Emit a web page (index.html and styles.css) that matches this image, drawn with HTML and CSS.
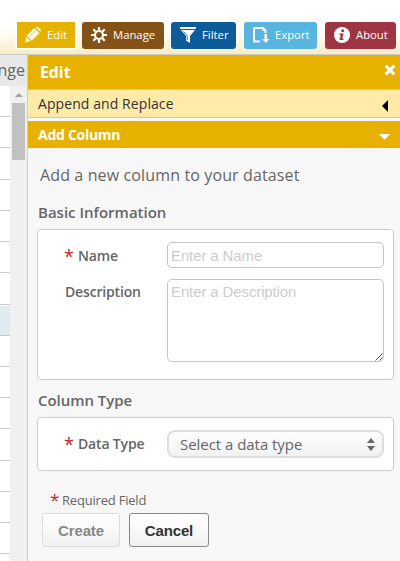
FILE: index.html
```
<!DOCTYPE html>
<html lang="en">
<head>
<meta charset="utf-8">
<title>Edit dataset</title>
<link rel="stylesheet" href="styles.css">
</head>
<body>
<header class="toolbar">
  <button class="tool edit"><svg width="18" height="18" viewBox="0 0 18 18"><g fill="#fff8dc"><path d="M1 16.5 2.2 10.7 6.6 15.2z"/><path d="M2.6 9.8 10.4 2 15.6 7.2 7.8 14.8z"/><path d="M11.4 1.2Q13 .2 14.3 1.2L16.4 3.3Q17.4 4.7 16.3 6.1z"/></g><path d="M4.6 11.4 12.2 3.9" stroke="#efcf68" stroke-width=".8"/></svg><span>Edit</span></button>
  <button class="tool manage"><svg width="18" height="18" viewBox="0 0 18 18"><g stroke="#fff" fill="none"><circle cx="9" cy="9" r="4" stroke-width="2.2"/><path stroke-width="2.2" d="M9 1v3M9 14v3M1 9h3M14 9h3M3.3 3.3l2.2 2.2M12.5 12.5l2.2 2.2M3.3 14.7l2.2-2.2M12.5 5.5l2.2-2.2"/></g></svg><span>Manage</span></button>
  <button class="tool filter"><svg width="18" height="18" viewBox="0 0 18 18"><path fill="#fff" d="M1 1h16v2H1zM2 4h14l-5 6v7l-4-2.5V10z"/><path d="M4.5 5.3 8.2 9.8v4" fill="none" stroke="#0c5c9c" stroke-width=".8"/></svg><span>Filter</span></button>
  <button class="tool export"><svg width="18" height="18" viewBox="0 0 18 18"><path d="M8 15.5H2V2h9l2.5 2.5V7" fill="none" stroke="#fff" stroke-width="2"/><path fill="#fff" d="M10.5 1v4h4zM12.5 8h2.5v5h2.5l-3.7 4-3.8-4h2.5z"/></svg><span>Export</span></button>
  <button class="tool about"><svg width="18" height="18" viewBox="0 0 18 18"><circle cx="9" cy="9" r="8" fill="#fff"/><g fill="#9f3443"><circle cx="9.7" cy="4.8" r="1.5"/><path d="M6.6 7.4h4L9.3 12.4h1.5l-.6 1.6H6.5l1.3-5.1H6.3z"/></g></svg><span>About</span></button>
</header>
<main class="main">
  <section class="grid">
    <div class="heading">nge</div>
    <div class="scroller">
      <div class="rows"><i></i><i></i><i></i><i></i><i></i><i></i><i></i><i class="selected"></i><i></i><i></i><i></i><i></i><i></i><i></i><i></i><i></i></div>
      <div class="scrollbar"><b class="up"></b><b class="thumb"></b></div>
    </div>
  </section>
  <aside class="panel">
    <div class="title"><h1>Edit</h1><svg width="12" height="12" viewBox="0 0 12 12"><path d="M1.7 1.7l8.6 8.6M10.3 1.7l-8.6 8.6" stroke="#fff" stroke-width="3.2"/></svg></div>
    <div class="section"><span>Append and Replace</span><svg width="6" height="12" viewBox="0 0 6 12"><path d="M6 0v12L0 6z"/></svg></div>
    <div class="section active"><span>Add Column</span><svg width="11" height="6" viewBox="0 0 11 6"><path d="M0 0h11L5.5 6z" fill="#fff"/></svg></div>
    <form class="form">
      <p class="intro"><span>Add a new column to your dataset</span></p>
      <h2>Basic Information</h2>
      <div class="card basics">
        <label><em>*</em><span>Name</span></label><input placeholder="Enter a Name">
        <label class="description"><span>Description</span></label><div class="area"><textarea placeholder="Enter a Description"></textarea><svg class="grip" width="8" height="8" viewBox="0 0 8 8"><path d="M.5 7.5l7-7M4.5 7.5l3-3" stroke="#555" stroke-width="1"/></svg></div>
      </div>
      <h2 class="second">Column Type</h2>
      <div class="card type">
        <label><em>*</em><span>Data Type</span></label>
        <div class="select"><span>Select a data type</span><svg width="8" height="13" viewBox="0 0 8 13"><path d="M0 5 4 0l4 5zM0 8h8l-4 5z" fill="#666"/></svg></div>
      </div>
      <p class="required"><em>*</em><span>Required Field</span></p>
      <div class="actions"><button type="button" class="create" disabled>Create</button><button type="button" class="cancel">Cancel</button></div>
    </form>
  </aside>
</main>
</body>
</html>
```
FILE: styles.css
```
* { box-sizing: border-box; }
body { margin: 0; width: 400px; height: 561px; overflow: hidden; background: #fff; font-family: "Open Sans", sans-serif; color: #666; }
svg { display: block; flex: none; }
h1, h2, p { margin: 0; }
em { font-style: normal; }
.toolbar { height: 55px; padding: 22px 4px 0 17px; display: flex; align-items: flex-start; border-bottom: 1px solid #ccc; background: linear-gradient(#fff 20px, #fffdf6 34px, #f7ecc4 54px); }
.tool { height: 27px; display: flex; align-items: center; border: 0; border-radius: 3px; padding: 0 0 1px 8px; gap: 5px; color: #fff; font: 11.3px/16px "Open Sans", sans-serif; white-space: nowrap; }
.edit { width: 58px; height: 26px; padding: 0 0 0 7px; margin-right: 7px; background: #e7b100; border-radius: 0; box-shadow: 0 0 0 1.5px #fff; gap: 5px; }
.manage { width: 82px; margin-right: 7px; background: #845117; }
.filter { width: 65px; margin-right: 8px; background: #0c5c9c; }
.export { width: 73px; margin-right: 8px; background: #57b5df; }
.about { width: 71px; background: #9f3443; }
.main { display: flex; height: 506px; }
.grid { width: 28px; flex: none; border-right: 1px solid #ccc; }
.heading { height: 31px; background: #e8e8e8; font-size: 16px; line-height: 31px; display: flex; justify-content: flex-end; padding-right: 2px; overflow: hidden; }
.scroller { display: flex; height: 475px; }
.rows { width: 10px; height: 475px; overflow: hidden; }
.rows i { display: block; height: 31.22px; border-bottom: 1px solid #ccc; }
.rows .selected { background: #dfebf1; border-top: 1px solid #fff; }
.scrollbar { width: 17px; background: #f0f0f0; display: flex; flex-direction: column; align-items: center; padding-top: 7px; }
.up { border: 4px solid transparent; border-top: 0; border-bottom-color: #a3a3a3; }
.thumb { width: 13px; height: 57px; margin-top: 6px; background: #c1c1c1; }
.panel { width: 372px; background: #f7f7f7; }
.title { height: 35px; padding: 0 4px 4px 12px; display: flex; align-items: center; justify-content: space-between; background: #e7b100; border-bottom: 1px solid #fc2; color: #fff; }
.title h1 { font-size: 15.8px; line-height: 22px; padding-top: 3px; }
.title svg { margin-top: -1px; }
.section { height: 28px; padding: 0 12px 0 10px; display: flex; align-items: center; justify-content: space-between; background: #ffeaa8; border-bottom: 1px solid #fc2; color: #333; font-size: 14px; letter-spacing: .08px; }
.section svg { margin-top: 4px; }
.section.active { height: 27px; margin-top: 3px; border: 0; background: #e7b100; color: #fff; font-weight: 700; padding: 0 10px 0 10px; letter-spacing: -.28px; }
.active svg { margin-top: 5px; }
.form { padding: 0 6px 0 9px; }
.intro { font-size: 16px; line-height: 22px; padding: 16px 0 0 3px; height: 54px; letter-spacing: .13px; }
h2 { font-size: 15px; font-weight: 600; line-height: 20px; height: 27px; padding-left: 1px; }
h2.second { height: 27px; margin-top: 10px; letter-spacing: -.05px; }
.card { background: #fff; border: 1px solid #ccc; border-radius: 4px; display: grid; grid-template-columns: 102px 217px; padding: 12px 9px 12px 27px; align-items: start; }
.basics { height: 151px; row-gap: 11px; grid-template-rows: 26px 83px; }
.type { height: 54px; }
label { display: flex; font-size: 14px; font-weight: 600; line-height: 20px; padding-top: 4px; letter-spacing: -.17px; }
label.description { padding-top: 3px; }
label em, .required em { color: #c8202a; font-weight: 400; font-size: 18px; width: 13px; line-height: 20px; margin-left: -1px; margin-right: 1px; }
input, textarea { display: block; width: 217px; border: 1px solid #c5c5c5; border-radius: 5px; font: 15px/18px "Liberation Sans", sans-serif; letter-spacing: -.12px; padding: 3px; margin: 0; background: #fff; resize: none; }
input { height: 26px; }
textarea { height: 83px; }
::placeholder { color: #ccc; opacity: 1; }
.area { position: relative; }
.grip { position: absolute; right: 1px; bottom: 1px; }
.select { height: 28px; border: 2px solid #ddd; border-radius: 8px; background: linear-gradient(#fff, #f1f1f1); display: flex; align-items: center; justify-content: space-between; padding: 0 7px 0 11px; font-size: 15px; letter-spacing: -.04px; }
.required { display: flex; font-size: 13px; line-height: 18px; padding-left: 13px; margin-top: 20px; height: 22px; letter-spacing: -.2px; }
.required em { font-size: 17px; width: 12px; line-height: 18px; margin: 0; }
.actions { display: flex; gap: 9px; padding-left: 5px; }
.actions button { width: 78px; height: 34px; border: 1px solid #ddd; border-radius: 3px; background: linear-gradient(#fff, #f1f1f1); color: #888; font: bold 15px "Liberation Sans", sans-serif; letter-spacing: -.15px; padding: 0; }
.actions .cancel { width: 80px; border-color: #888; color: #333; }
```
